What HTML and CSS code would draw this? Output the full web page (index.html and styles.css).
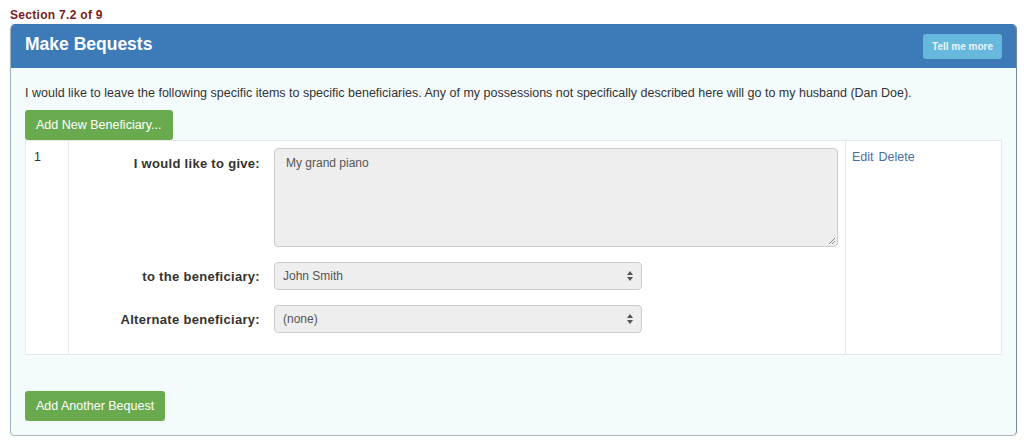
FILE: index.html
```html
<!DOCTYPE html>
<html>
<head>
<meta charset="utf-8">
<link rel="stylesheet" href="styles.css">
</head>
<body>
<div class="section-label">Section 7.2 of 9</div>
<div class="panel">
  <div class="panel-heading">
    <h2 class="panel-title">Make Bequests</h2>
    <button class="btn btn-info">Tell me more</button>
  </div>
  <div class="panel-body">
    <p class="intro">I would like to leave the following specific items to specific beneficiaries. Any of my possessions not specifically described here will go to my husband (Dan Doe).</p>
    <button class="btn btn-success">Add New Beneficiary...</button>
    <div class="bequest-table">
      <div class="cell cell-num">1</div>
      <div class="cell cell-form">
        <label class="form-label label-top">I would like to give:</label>
        <div class="textarea">My grand piano<svg class="grip" width="8" height="8" viewBox="0 0 8 8"><path d="M1 7L7 1M4 7L7 4" stroke="#888" stroke-width="1"/></svg></div>
        <label class="form-label">to the beneficiary:</label>
        <div class="select">John Smith<svg class="arrows" width="6" height="10" viewBox="0 0 6 10"><path d="M0 4L3 0L6 4Z M0 6L3 10L6 6Z" fill="#555"/></svg></div>
        <label class="form-label">Alternate beneficiary:</label>
        <div class="select">(none)<svg class="arrows" width="6" height="10" viewBox="0 0 6 10"><path d="M0 4L3 0L6 4Z M0 6L3 10L6 6Z" fill="#555"/></svg></div>
      </div>
      <div class="cell cell-actions"><a class="link">Edit</a><a class="link">Delete</a></div>
    </div>
    <button class="btn btn-success btn-bottom">Add Another Bequest</button>
  </div>
</div>
</body>
</html>
```
FILE: styles.css
```css
* { box-sizing: border-box; }
body {
  margin: 0;
  padding: 8px 7px 0 10px;
  font-family: "Liberation Sans", Arial, sans-serif;
  font-size: 12.5px;
  color: #333;
  background: #fff;
}
.section-label {
  font-size: 12px;
  font-weight: bold;
  color: #7a1c1c;
  line-height: 14px;
  height: 16px;
  letter-spacing: 0.3px;
}
.panel {
  border: 1px solid #3a76b2;
  border-left-color: #9fb4c4;
  border-right-color: #6f8aa2;
  border-bottom-color: #a9b6bf;
  border-radius: 5px;
  background: #f4fbfd;
  box-shadow: 0 1px 2px rgba(0,0,0,0.12);
  overflow: hidden;
}
.panel-heading {
  background: #3d7ab8;
  height: 43px;
  display: flex;
  align-items: center;
  justify-content: space-between;
  padding: 0 14px 0 14px;
}
.panel-title {
  margin: 0;
  color: #fff;
  font-size: 17.5px;
  font-weight: bold;
  margin-top: -5px;
}
.btn {
  border: none;
  border-radius: 3px;
  color: #fff;
  font-family: "Liberation Sans", Arial, sans-serif;
  cursor: pointer;
}
.btn-info {
  background: #67b8dd;
  font-size: 10px;
  height: 25px;
  padding: 0 9px;
  font-weight: bold;
  color: #e8f4fa;
}
.panel-body {
  padding: 18px 14px 14px 14px;
}
.intro {
  margin: 0 0 9px 0;
  line-height: 15px;
}
.btn-success {
  background: #6aaa4e;
  font-size: 12.5px;
  height: 30px;
  padding: 0 11px;
  display: block;
}
.bequest-table {
  display: grid;
  grid-template-columns: 43px 1fr 156px;
  background: #fff;
  border: 1px solid #e3e8ea;
  height: 215px;
}
.cell {
  padding: 8px 8px;
}
.cell-num {
  border-right: 1px solid #e3e8ea;
  padding-top: 9px;
  padding-left: 8px;
}
.cell-actions {
  border-left: 1px solid #e3e8ea;
  padding: 9px 6px;
  display: flex;
  gap: 5px;
  align-items: flex-start;
}
.link {
  color: #46709e;
  font-size: 12.5px;
}
.cell-form {
  display: grid;
  grid-template-columns: 191px 564px;
  column-gap: 14px;
  row-gap: 15px;
  align-content: start;
  align-items: center;
  padding: 7px 0 0 0;
}
.form-label {
  text-align: right;
  font-weight: bold;
  color: #333;
  font-size: 13px;
  letter-spacing: 0.3px;
}
.label-top {
  align-self: start;
  padding-top: 8px;
}
.textarea {
  position: relative;
  height: 99px;
  background: #eee;
  border: 1px solid #ccc;
  border-radius: 4px;
  padding: 7px 11px;
  color: #555;
  font-size: 12px;
}
.grip {
  position: absolute;
  right: 1px;
  bottom: 1px;
}
.select {
  width: 368px;
  height: 28px;
  background: #eee;
  border: 1px solid #ccc;
  border-radius: 4px;
  padding: 0 8px;
  display: flex;
  align-items: center;
  justify-content: space-between;
  color: #555;
  font-size: 12px;
}
.btn-bottom {
  margin-top: 36px;
}
```
